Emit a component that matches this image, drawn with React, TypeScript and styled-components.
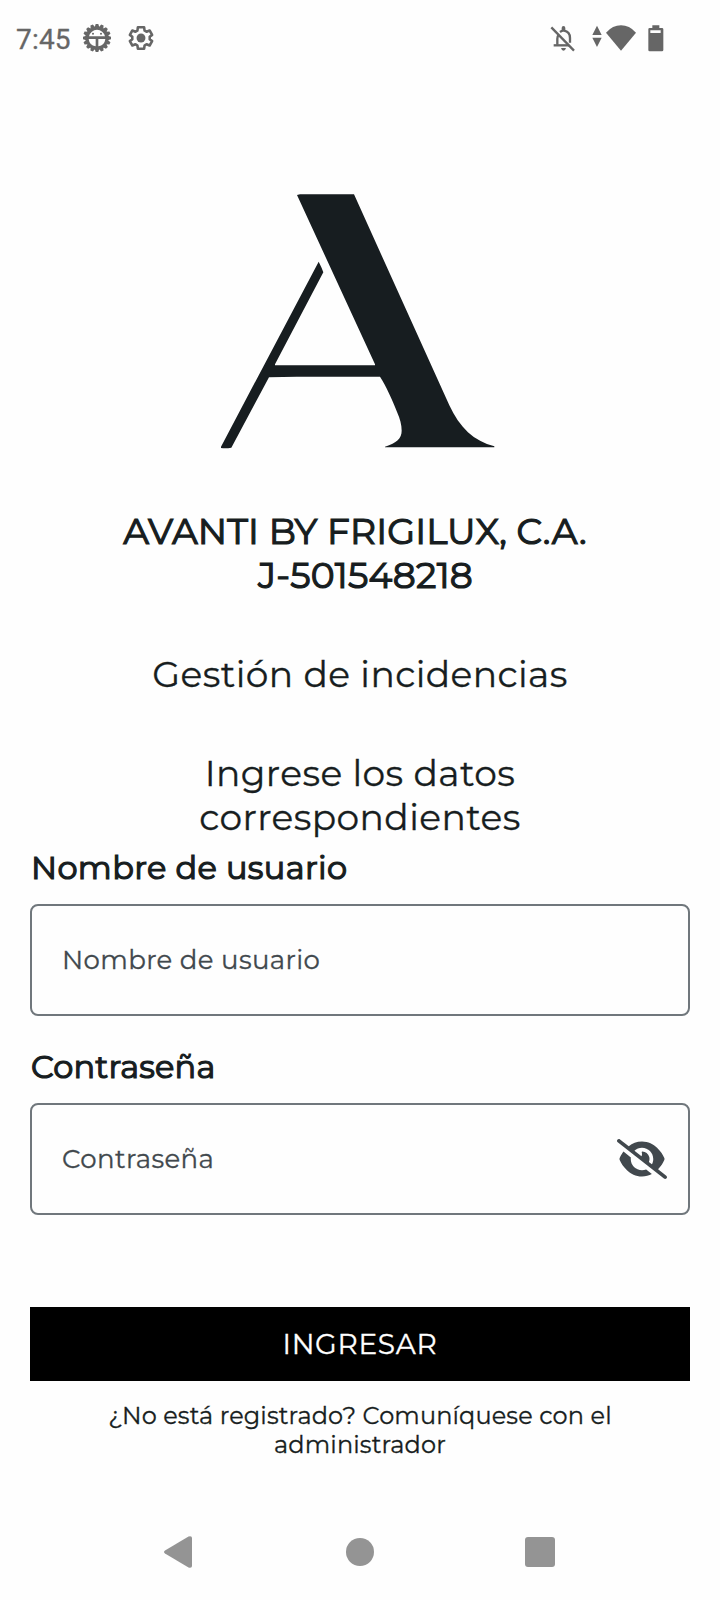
import React from 'react';
import styled, { createGlobalStyle } from 'styled-components';
import { FaEyeSlash } from 'react-icons/fa6';

const ink = '#171d20';
const statusGrey = '#666666';
const navGrey = '#949494';

const GlobalStyle = createGlobalStyle`
  *, *::before, *::after { box-sizing: border-box; }
  body { margin: 0; background: #fefefe; }
`;

const Screen = styled.div`
  display: flex;
  flex-direction: column;
  width: 720px;
  height: 1600px;
  background: #fefefe;
  color: ${ink};
  font-family: Montserrat, Inter, 'Liberation Sans', sans-serif;
  overflow: hidden;
`;

const StatusBar = styled.header`
  display: flex;
  align-items: center;
  justify-content: space-between;
  height: 76px;
  padding: 0 56px 0 16px;
  color: ${statusGrey};
`;

const StatusGroup = styled.div<{ $gap: number }>`
  display: flex;
  align-items: center;
  gap: ${({ $gap }) => $gap}px;
`;

const Clock = styled.span`
  font-family: Roboto, sans-serif;
  font-size: 28px;
  line-height: 32px;
  padding-top: 3px;
  width: 56px;
  letter-spacing: 0.2px;
  -webkit-text-stroke: 0.3px currentColor;
`;

const Glyph = styled.svg`
  display: block;
  flex: none;
`;

const Main = styled.main`
  display: flex;
  flex-direction: column;
  flex: 1;
  padding: 118px 30px 0;
`;

const Logo = styled(Glyph)`
  align-self: center;
  margin-right: 4px;
`;

const TextLine = styled.span<{ $tracking?: number }>`
  display: block;
  white-space: nowrap;
  letter-spacing: ${({ $tracking = 0 }) => $tracking}px;
`;

const CenteredLine = styled(TextLine)<{ $shift?: number }>`
  text-align: center;
  padding-left: ${({ $shift = 0 }) => Math.max($shift, 0)}px;
  padding-right: ${({ $shift = 0 }) => Math.max(-$shift, 0)}px;
`;

const Company = styled.h1`
  margin: 59px 0 0;
  font-size: 36px;
  font-weight: 400;
  -webkit-text-stroke: 1.2px currentColor;
  line-height: 44px;
`;

const Heading = styled.h2`
  margin: 55px 0 0;
  font-size: 36px;
  font-weight: 400;
  -webkit-text-stroke: 0.3px currentColor;
  line-height: 44px;
`;

const FieldLabel = styled.label<{ $top: number }>`
  display: block;
  margin-top: ${({ $top }) => $top}px;
  padding-left: 1px;
  font-size: 32px;
  font-weight: 400;
  -webkit-text-stroke: 1.2px currentColor;
  line-height: 40px;
`;

const Field = styled.div<{ $top: number }>`
  display: flex;
  align-items: center;
  justify-content: space-between;
  height: 112px;
  margin-top: ${({ $top }) => $top}px;
  padding: 0 21px 0 30px;
  border: 2px solid #70777c;
  border-radius: 8px;
  color: #41484d;
  font-size: 26px;
  font-weight: 400;
  -webkit-text-stroke: 0.3px currentColor;
  line-height: 32px;
`;

const RevealButton = styled.button`
  display: flex;
  padding: 0;
  border: 0;
  background: none;
  color: inherit;
`;

const SubmitButton = styled.button`
  height: 74px;
  margin-top: 92px;
  padding: 0;
  border: 0;
  background: #000;
  color: #fff;
  font-family: inherit;
  font-size: 28px;
  font-weight: 400;
  -webkit-text-stroke: 0.3px currentColor;
  line-height: 36px;
`;

const Hint = styled.p`
  margin: 20px 0 0;
  font-size: 24px;
  font-weight: 400;
  -webkit-text-stroke: 0.3px currentColor;
  line-height: 29px;
`;

const NavBar = styled.nav`
  display: grid;
  grid-template-columns: repeat(3, 180px);
  justify-content: center;
  justify-items: center;
  align-items: center;
  height: 96px;
  color: ${navGrey};
`;

const BackGlyph = styled(Glyph)`
  margin-right: 4px;
`;

const BugIcon = () => {
  const teeth = Array.from({ length: 16 }, (_, i) => i * 22.5);
  return (
    <Glyph width="28" height="28" viewBox="-42 -42 84 84" fill="currentColor">
      {teeth.map((a) => (
        <path key={a} d="M-7 -32 L-4 -42 H4 L7 -32Z" transform={`rotate(${a})`} />
      ))}
      <circle r="34.5" />
      <path d="M-24 -5 A24.5 24.5 0 0 1 24 -5Z" fill="#fefefe" />
      <circle cx="-12" cy="-13" r="3" />
      <circle cx="12" cy="-13" r="3" />
      <path d="M-25 3 H-4 V25 A25 25 0 0 1 -25 3Z M4 3 H25 A25 25 0 0 1 4 25Z" fill="#fefefe" />
    </Glyph>
  );
};

const GearIcon = () => (
  <Glyph width="28" height="28" viewBox="0 0 24 24">
    <path
      transform="translate(12 12) scale(1 1.02) translate(-12 -12)"
      fill="none"
      stroke="currentColor"
      strokeWidth="2.2"
      strokeLinejoin="round"
      d="M19.43 12.98c.04-.32.07-.64.07-.98 0-.34-.03-.66-.07-.98l2.11-1.65-2.12-3.67-2.66 1.05c-.52-.4-1.08-.73-1.69-.98l-.4-2.77h-5.34l-.4 2.77c-.61.25-1.17.59-1.69.98l-2.66-1.05-2.12 3.67 2.11 1.65c-.04.32-.07.65-.07.98s.03.66.07.98l-2.11 1.65 2.12 3.67 2.66-1.05c.52.4 1.08.73 1.69.98l.4 2.77h5.34l.4-2.77c.61-.25 1.17-.59 1.69-.98l2.66 1.05 2.12-3.67z"
    />
    <circle cx="12" cy="12" r="3.8" fill="currentColor" />
  </Glyph>
);

const BellOffIcon = () => (
  <Glyph width="25" height="27" viewBox="61 45 75 81" fill="none" stroke="currentColor" strokeWidth="7">
    <path d="M65 52 L133 122" />
    <path d="M72 106 H118" />
    <path d="M83 104 V86 Q83 79 87 74" />
    <path d="M91 66 Q97 61 103 62 Q121 65 121 84 V98" />
    <path d="M96 62 V54 Q96 48 101.500 48 Q107 48 107 54 V62Z M94 114 H109 Q107 122 101.500 122 Q96 122 94 114Z" fill="currentColor" stroke="none" />
  </Glyph>
);

const DataIcon = () => (
  <Glyph width="10" height="27" viewBox="188 42 30 81" fill="currentColor">
    <path d="M203 44 L217 72 H189Z M189 80 H217 L203 108Z" />
  </Glyph>
);

const WifiIcon = () => (
  <Glyph width="30" height="27" viewBox="228 44 90 81" fill="currentColor">
    <path d="M273 121 L228 67 Q248 45 273 45 Q298 45 318 67Z" />
  </Glyph>
);

const BatteryIcon = () => (
  <Glyph width="16" height="27" viewBox="356 44 48 81">
    <path
      fill="currentColor"
      fillRule="evenodd"
      d="M369 45 H390 V53 H398 Q402 53 402 57 V119 Q402 123 398 123 H361 Q357 123 357 119 V57 Q357 53 361 53 H369Z M363 60 V68 H394 V60Z"
    />
  </Glyph>
);

const AvantiMark = () => (
  <Logo width="276" height="256" viewBox="30 42 828 768" fill={ink}>
    <path d="M261 45 L270 43 H432 L718 676 C748 742 792 784 853 799 V802 H525 V800 C560 789 575 775 575 752 C575 735 570 715 562 698 C545 656 529 619 510 590 H260 L177 592 L64 803 Q48 806 33 804 V800 L326 245 L334 262 L340 277 L195 553 V556 H495 V553Z" />
  </Logo>
);

export default function App() {
  return (
    <Screen>
      <GlobalStyle />
      <StatusBar>
        <StatusGroup $gap={11}>
          <Clock>7:45</Clock>
          <StatusGroup $gap={16}>
            <BugIcon />
            <GearIcon />
          </StatusGroup>
        </StatusGroup>
        <StatusGroup $gap={12}>
          <StatusGroup $gap={17}>
            <BellOffIcon />
            <StatusGroup $gap={4}>
              <DataIcon />
              <WifiIcon />
            </StatusGroup>
          </StatusGroup>
          <BatteryIcon />
        </StatusGroup>
      </StatusBar>

      <Main>
        <AvantiMark />
        <Company>
          <CenteredLine $tracking={0.16} $shift={-10}>AVANTI BY FRIGILUX, C.A.</CenteredLine>
          <CenteredLine $tracking={0.2} $shift={11}>J-501548218</CenteredLine>
        </Company>
        <Heading>
          <CenteredLine $tracking={0.43}>Gestión de incidencias</CenteredLine>
        </Heading>
        <Heading>
          <CenteredLine $tracking={0.43}>Ingrese los datos</CenteredLine>
          <CenteredLine $tracking={0.43}>correspondientes</CenteredLine>
        </Heading>

        <FieldLabel $top={9}>
          <TextLine $tracking={0.37}>Nombre de usuario</TextLine>
        </FieldLabel>
        <Field $top={16}>
          <TextLine $tracking={0.37}>Nombre de usuario</TextLine>
        </Field>

        <FieldLabel $top={31}>
          <TextLine $tracking={0.2}>Contraseña</TextLine>
        </FieldLabel>
        <Field $top={16}>
          <TextLine $tracking={0.4}>Contraseña</TextLine>
          <RevealButton aria-label="Mostrar contraseña">
            <FaEyeSlash size={50} />
          </RevealButton>
        </Field>

        <SubmitButton>
          <CenteredLine $tracking={0.7}>INGRESAR</CenteredLine>
        </SubmitButton>
        <Hint>
          <CenteredLine $tracking={0.12}>¿No está registrado? Comuníquese con el</CenteredLine>
          <CenteredLine $tracking={0.12}>administrador</CenteredLine>
        </Hint>
      </Main>

      <NavBar>
        <BackGlyph width="28" height="32" viewBox="0 0 28 32" fill="currentColor">
          <path d="M1 14.500 L24.500 .5 Q28 -.5 28 2 V30 Q28 32.500 24.500 31.500 L1 17.500 Q-1 16 1 14.500Z" />
        </BackGlyph>
        <Glyph width="28" height="28" viewBox="0 0 28 28" fill="currentColor">
          <circle cx="14" cy="14" r="14" />
        </Glyph>
        <Glyph width="30" height="30" viewBox="0 0 30 30" fill="currentColor">
          <rect width="30" height="30" rx="3" />
        </Glyph>
      </NavBar>
    </Screen>
  );
}
